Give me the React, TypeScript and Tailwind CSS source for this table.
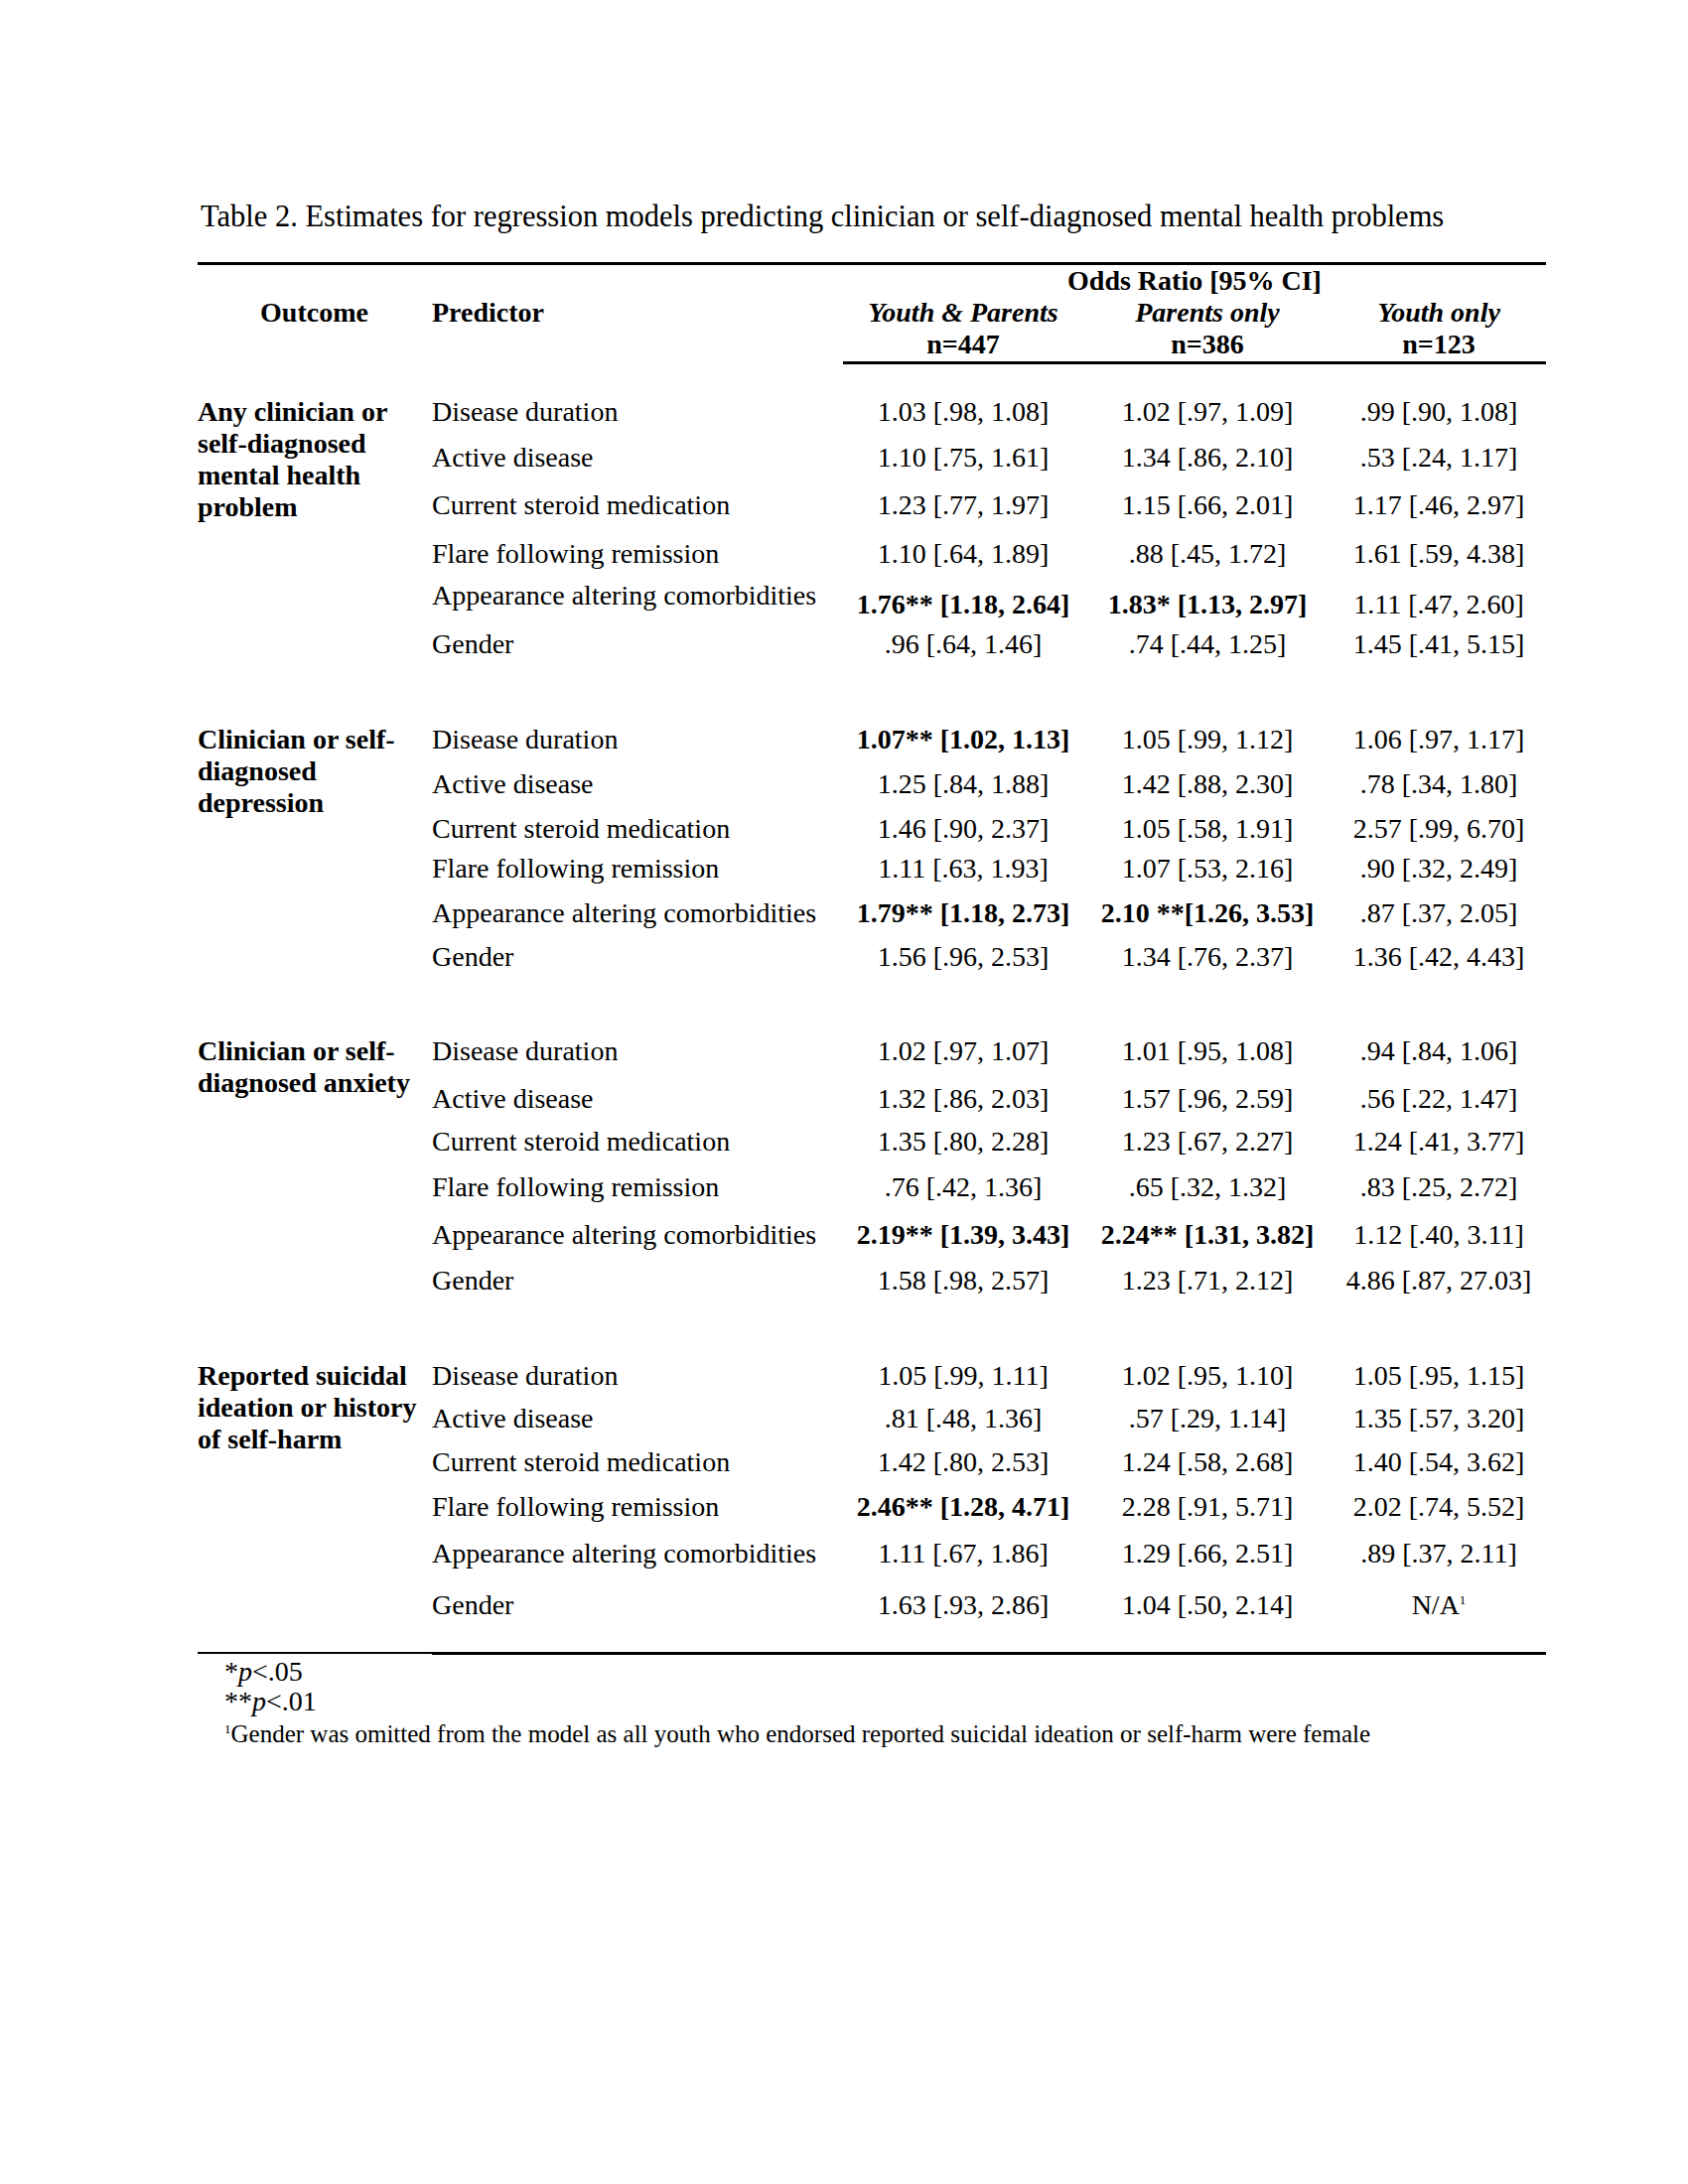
import React from "react";

type Row = { pred: string; vals: [string, string, string]; bold: [boolean, boolean, boolean]; h: string; off?: string; sup3?: boolean };
type Section = { label: string[]; rows: Row[] };

const N: [boolean, boolean, boolean] = [false, false, false];

const SECTIONS: Section[] = [
  {
    label: ["Any clinician or", "self-diagnosed", "mental health", "problem"],
    rows: [
      { pred: "Disease duration", vals: ["1.03 [.98, 1.08]", "1.02 [.97, 1.09]", ".99 [.90, 1.08]"], bold: N, h: "h-[46px]" },
      { pred: "Active disease", vals: ["1.10 [.75, 1.61]", "1.34 [.86, 2.10]", ".53 [.24, 1.17]"], bold: N, h: "h-[48px]" },
      { pred: "Current steroid medication", vals: ["1.23 [.77, 1.97]", "1.15 [.66, 2.01]", "1.17 [.46, 2.97]"], bold: N, h: "h-[49px]" },
      { pred: "Flare following remission", vals: ["1.10 [.64, 1.89]", ".88 [.45, 1.72]", "1.61 [.59, 4.38]"], bold: N, h: "h-[42px]" },
      { pred: "Appearance altering comorbidities", vals: ["1.76** [1.18, 2.64]", "1.83* [1.13, 2.97]", "1.11 [.47, 2.60]"], bold: [true, true, false], h: "h-[49px]", off: "pt-[9px]" },
      { pred: "Gender", vals: [".96 [.64, 1.46]", ".74 [.44, 1.25]", "1.45 [.41, 5.15]"], bold: N, h: "h-[96px]" },
    ],
  },
  {
    label: ["Clinician or self-", "diagnosed", "depression"],
    rows: [
      { pred: "Disease duration", vals: ["1.07** [1.02, 1.13]", "1.05 [.99, 1.12]", "1.06 [.97, 1.17]"], bold: [true, false, false], h: "h-[45px]" },
      { pred: "Active disease", vals: ["1.25 [.84, 1.88]", "1.42 [.88, 2.30]", ".78 [.34, 1.80]"], bold: N, h: "h-[45px]" },
      { pred: "Current steroid medication", vals: ["1.46 [.90, 2.37]", "1.05 [.58, 1.91]", "2.57 [.99, 6.70]"], bold: N, h: "h-[40px]" },
      { pred: "Flare following remission", vals: ["1.11 [.63, 1.93]", "1.07 [.53, 2.16]", ".90 [.32, 2.49]"], bold: N, h: "h-[45px]" },
      { pred: "Appearance altering comorbidities", vals: ["1.79** [1.18, 2.73]", "2.10 **[1.26, 3.53]", ".87 [.37, 2.05]"], bold: [true, true, false], h: "h-[44px]" },
      { pred: "Gender", vals: ["1.56 [.96, 2.53]", "1.34 [.76, 2.37]", "1.36 [.42, 4.43]"], bold: N, h: "h-[95px]" },
    ],
  },
  {
    label: ["Clinician or self-", "diagnosed anxiety"],
    rows: [
      { pred: "Disease duration", vals: ["1.02 [.97, 1.07]", "1.01 [.95, 1.08]", ".94 [.84, 1.06]"], bold: N, h: "h-[48px]" },
      { pred: "Active disease", vals: ["1.32 [.86, 2.03]", "1.57 [.96, 2.59]", ".56 [.22, 1.47]"], bold: N, h: "h-[43px]" },
      { pred: "Current steroid medication", vals: ["1.35 [.80, 2.28]", "1.23 [.67, 2.27]", "1.24 [.41, 3.77]"], bold: N, h: "h-[46px]" },
      { pred: "Flare following remission", vals: [".76 [.42, 1.36]", ".65 [.32, 1.32]", ".83 [.25, 2.72]"], bold: N, h: "h-[48px]" },
      { pred: "Appearance altering comorbidities", vals: ["2.19** [1.39, 3.43]", "2.24** [1.31, 3.82]", "1.12 [.40, 3.11]"], bold: [true, true, false], h: "h-[46px]" },
      { pred: "Gender", vals: ["1.58 [.98, 2.57]", "1.23 [.71, 2.12]", "4.86 [.87, 27.03]"], bold: N, h: "h-[96px]" },
    ],
  },
  {
    label: ["Reported suicidal", "ideation or history", "of self-harm"],
    rows: [
      { pred: "Disease duration", vals: ["1.05 [.99, 1.11]", "1.02 [.95, 1.10]", "1.05 [.95, 1.15]"], bold: N, h: "h-[43px]" },
      { pred: "Active disease", vals: [".81 [.48, 1.36]", ".57 [.29, 1.14]", "1.35 [.57, 3.20]"], bold: N, h: "h-[44px]" },
      { pred: "Current steroid medication", vals: ["1.42 [.80, 2.53]", "1.24 [.58, 2.68]", "1.40 [.54, 3.62]"], bold: N, h: "h-[45px]" },
      { pred: "Flare following remission", vals: ["2.46** [1.28, 4.71]", "2.28 [.91, 5.71]", "2.02 [.74, 5.52]"], bold: [true, false, false], h: "h-[47px]" },
      { pred: "Appearance altering comorbidities", vals: ["1.11 [.67, 1.86]", "1.29 [.66, 2.51]", ".89 [.37, 2.11]"], bold: N, h: "h-[52px]" },
      { pred: "Gender", vals: ["1.63 [.93, 2.86]", "1.04 [.50, 2.14]", "N/A"], bold: N, h: "h-[63px]", sup3: true },
    ],
  },
];

const COLW = ["w-[242px]", "w-[250px]", "w-[216px]"];

function DataRow({ r }: { r: Row }) {
  return (
    <div className={`flex ${r.h}`}>
      <div className="w-[415px] pl-px">{r.pred}</div>
      {r.vals.map((v, i) => (
        <div key={i} className={`${COLW[i]} text-center ${r.bold[i] ? "font-bold" : ""} ${r.off ?? ""}`}>
          {v}
          {i === 2 && r.sup3 && <span className="align-super text-[13px] leading-none">1</span>}
        </div>
      ))}
    </div>
  );
}

export default function App() {
  return (
    <div className="min-h-[2200px] w-[1700px] bg-white text-black font-['Liberation_Serif','Times_New_Roman',serif]">
      <div className="ml-[199px] w-[1358px] pt-[202px]">
        <p className="pl-[3px] text-[30.5px] leading-[32px] whitespace-nowrap">
          Table 2. Estimates for regression models predicting clinician or self-diagnosed mental health problems
        </p>

        <div className="mt-[30px] h-[3px] bg-black" />

        {/* header */}
        <div className="grid grid-cols-[235px_415px_242px_250px_216px] text-[28px] font-bold leading-[32px]">
          <div className="col-span-2" />
          <div className="col-span-3 text-center">Odds Ratio [95% CI]</div>
          <div className="text-center">Outcome</div>
          <div className="pl-px">Predictor</div>
          <div className="text-center italic">Youth &amp; Parents</div>
          <div className="text-center italic">Parents only</div>
          <div className="text-center italic">Youth only</div>
          <div className="col-span-2" />
          <div className="text-center">n=447</div>
          <div className="text-center">n=386</div>
          <div className="text-center">n=123</div>
        </div>
        <div className="ml-[650px] mt-px h-[3px] bg-black" />

        {/* body */}
        <div className="mt-[32px] text-[28px] leading-[32px]">
          {SECTIONS.map((s, si) => (
            <div key={si} className="flex">
              <div className="w-[235px] shrink-0 font-bold whitespace-nowrap">
                {s.label.map((l) => (
                  <div key={l}>{l}</div>
                ))}
              </div>
              <div className="flex flex-col">
                {s.rows.map((r, ri) => (
                  <DataRow key={ri} r={r} />
                ))}
              </div>
            </div>
          ))}
        </div>

        <div className="flex items-start">
          <div className="h-[2px] w-[236px] bg-black" />
          <div className="h-[3px] flex-1 bg-black" />
        </div>

        {/* notes */}
        <div className="pl-[27px] pt-[2px]">
          <p className="text-[28px] leading-[30px]">
            *<i>p</i>&lt;.05
          </p>
          <p className="text-[28px] leading-[30px]">
            **<i>p</i>&lt;.01
          </p>
          <p className="pt-[3px] text-[25px] leading-[30px] whitespace-nowrap">
            <span className="align-super text-[13px] leading-none">1</span>
            Gender was omitted from the model as all youth who endorsed reported suicidal ideation or self-harm were female
          </p>
        </div>
      </div>
    </div>
  );
}
